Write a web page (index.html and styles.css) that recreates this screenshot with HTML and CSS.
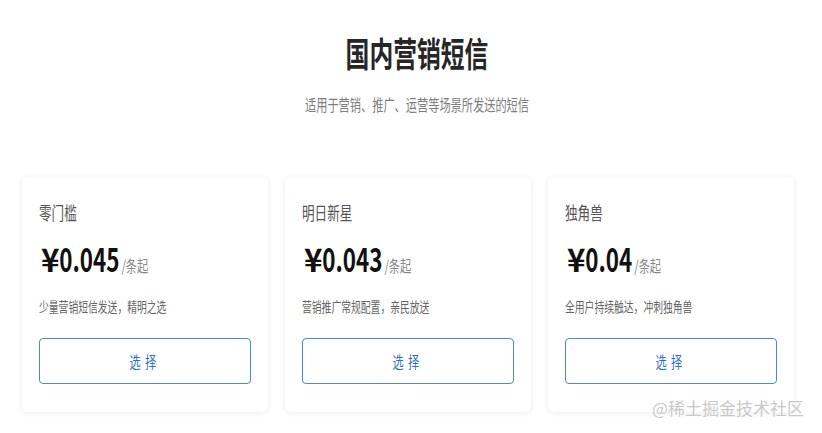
FILE: index.html
```html
<!DOCTYPE html>
<html lang="zh-CN">
<head>
<meta charset="utf-8">
<title>国内营销短信</title>
<link rel="stylesheet" href="styles.css">
</head>
<body>
<div class="page">
  <header class="hero">
    <h1 class="hero-title"><span class="cond cond-center">国内营销短信</span></h1>
    <p class="hero-sub"><span class="cond cond-center">适用于营销、推广、运营等场景所发送的短信</span></p>
  </header>
  <section class="plans">
    <div class="card">
      <div class="card-name"><span class="cond">零门槛</span></div>
      <div class="card-price"><span class="cond"><span class="amount"><span class="yen">¥</span>0.045</span><span class="unit">/条起</span></span></div>
      <div class="card-desc"><span class="cond">少量营销短信发送，精明之选</span></div>
      <button class="btn"><span class="cond cond-center">选择</span></button>
    </div>
    <div class="card">
      <div class="card-name"><span class="cond">明日新星</span></div>
      <div class="card-price"><span class="cond"><span class="amount"><span class="yen">¥</span>0.043</span><span class="unit">/条起</span></span></div>
      <div class="card-desc"><span class="cond">营销推广常规配置，亲民放送</span></div>
      <button class="btn"><span class="cond cond-center">选择</span></button>
    </div>
    <div class="card">
      <div class="card-name"><span class="cond">独角兽</span></div>
      <div class="card-price"><span class="cond"><span class="amount"><span class="yen">¥</span>0.04</span><span class="unit">/条起</span></span></div>
      <div class="card-desc"><span class="cond">全用户持续触达，冲刺独角兽</span></div>
      <button class="btn"><span class="cond cond-center">选择</span></button>
    </div>
  </section>
  <div class="watermark">@稀土掘金技术社区</div>
</div>
</body>
</html>
```
FILE: styles.css
```css
html, body {
  margin: 0;
  padding: 0;
  background: #ffffff;
}
body {
  font-family: "Noto Sans CJK SC", "Noto Sans", sans-serif;
  width: 822px;
  height: 433px;
  overflow: hidden;
}
.page {
  position: relative;
  width: 822px;
  height: 433px;
}
.cond {
  display: inline-block;
  transform: scaleX(0.7);
  transform-origin: left center;
  white-space: nowrap;
}
.cond-center {
  transform-origin: center center;
}
.hero {
  text-align: center;
  padding-left: 12px;
  padding-top: 31px;
}
.hero-title {
  margin: 0;
  font-size: 34px;
  line-height: 44px;
  font-weight: 700;
  color: #262626;
}
.hero-sub {
  margin: 18px 0 0;
  font-size: 16px;
  line-height: 22px;
  color: #7d7d7d;
}
.plans {
  display: flex;
  gap: 17px;
  padding-left: 22px;
  margin-top: 62px;
}
.card {
  width: 246px;
  height: 235px;
  box-sizing: border-box;
  padding: 22px 17px 0;
  background: #fff;
  border-radius: 6px;
  box-shadow: 0 1px 6px rgba(0, 0, 0, 0.08);
}
.card-name {
  font-size: 18px;
  line-height: 26px;
  color: #555;
}
.card-price {
  margin-top: 13px;
  line-height: 40px;
  height: 40px;
}
.amount {
  font-size: 32px;
  font-weight: 700;
  color: #111;
}
.yen {
  display: inline-block;
  transform: scaleX(1.4);
  transform-origin: left center;
  margin-left: 3px;
  margin-right: 7px;
}
.unit {
  font-size: 16px;
  color: #888;
  margin-left: 3px;
}
.card-desc {
  margin-top: 18px;
  font-size: 14px;
  line-height: 20px;
  color: #666;
}
.btn {
  display: block;
  margin-top: 22px;
  width: 212px;
  height: 46px;
  padding: 0;
  background: #fff;
  border: 1px solid #4a88d8;
  border-radius: 4px;
  font-family: "Noto Sans CJK SC", "Noto Sans", sans-serif;
  font-size: 16px;
  color: #2f6fc6;
  letter-spacing: 6px;
  text-indent: 0;
  cursor: pointer;
}
.watermark {
  position: absolute;
  left: 652px;
  top: 396px;
  font-size: 17px;
  line-height: 24px;
  color: #c9c9c9;
  text-shadow: 0 0 1px #ffffff;
  white-space: nowrap;
}
```
